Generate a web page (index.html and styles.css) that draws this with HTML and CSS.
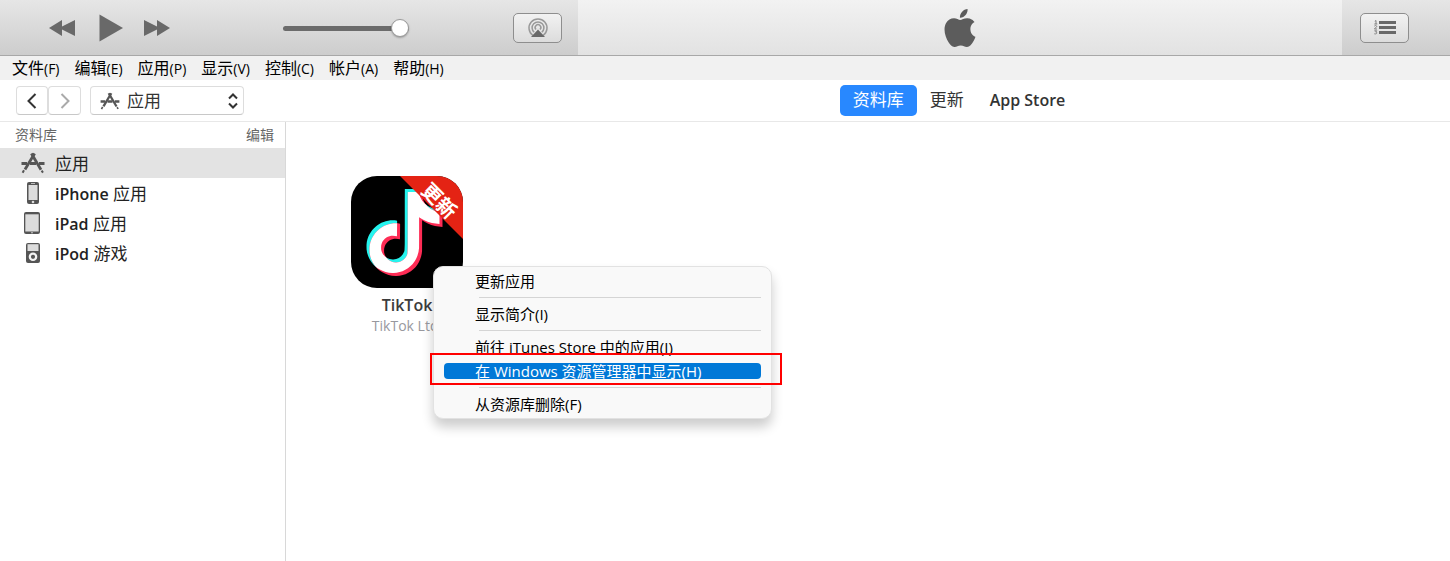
FILE: index.html
```html
<!DOCTYPE html>
<html lang="zh-CN">
<head>
<meta charset="utf-8">
<title>iTunes</title>
<link rel="stylesheet" href="styles.css">
</head>
<body>
<svg class="defs" aria-hidden="true">
  <symbol id="apps" viewBox="0 0 24 22">
    <g fill="none" stroke="currentColor">
      <path d="M13.600 1.500 4 17.500" stroke-width="2.800"/>
      <path d="m10.400 1.500 9.600 16.200" stroke-width="2.800"/>
      <path d="m3 18.200-1.400 2.600M20.600 18.600l1.400 2" stroke-width="2"/>
      <path d="M.500 11.500h5.500M9 11.500h6M18 11.500h5.500" stroke-width="3"/>
    </g>
  </symbol>
</svg>
<header class="player">
  <div class="transport">
    <button class="bare" aria-label="上一首"><svg width="27" height="18" viewBox="0 0 27 18"><path d="M0 9 13 1v6.500L26 1v16L13 10.500V17z"/></svg></button>
    <button class="bare" aria-label="播放"><svg width="25" height="28" viewBox="0 0 25 28"><path d="M.500.500 24 14 .500 27.500z"/></svg></button>
    <button class="bare" aria-label="下一首"><svg width="27" height="18" viewBox="0 0 27 18"><path d="M26 9 13 1v6.500L0 1v16l13-6.500V17z"/></svg></button>
    <input class="volume" type="range" min="0" max="100" value="100" aria-label="音量">
    <button class="bezel" aria-label="AirPlay">
      <svg width="22" height="22" viewBox="0 0 22 22"><g fill="none" stroke="#999" stroke-width="1.500"><path d="M6 18.500a9 9 0 1 1 10 0"/><path d="M7.200 15.300a5.900 5.900 0 1 1 7.600 0"/><path d="M9 12.500a2.800 2.800 0 1 1 4 0"/></g><path d="m11 12.500 7 7.500H4z"/></svg>
    </button>
  </div>
  <div class="display">
    <svg width="38" height="38" viewBox="0 0 24 24"><path d="M12.152 6.896c-.948 0-2.415-1.078-3.960-1.040-2.040.027-3.910 1.183-4.961 3.014-2.117 3.675-.546 9.103 1.519 12.090 1.013 1.454 2.208 3.090 3.792 3.039 1.520-.065 2.090-.987 3.935-.987 1.831 0 2.350.987 3.960.948 1.637-.026 2.676-1.480 3.676-2.948 1.156-1.688 1.636-3.325 1.662-3.415-.039-.013-3.182-1.221-3.220-4.857-.026-3.040 2.480-4.494 2.597-4.559-1.429-2.090-3.623-2.324-4.390-2.376-2-.156-3.675 1.090-4.610 1.090zM15.530 3.830c.843-1.012 1.400-2.427 1.245-3.830-1.207.052-2.662.805-3.532 1.818-.780.896-1.454 2.338-1.273 3.714 1.338.104 2.715-.688 3.559-1.701"/></svg>
  </div>
  <div class="queue">
    <button class="bezel" aria-label="待播清单">
      <svg width="22" height="15" viewBox="0 0 22 15"><path d="M5 1h17v3H5zM5 6h17v3H5zM5 11h17v3H5z"/><g fill="none" stroke="#777" stroke-width=".9"><path d="m.800 1.300 1.200-.800V4M.300 4h3M.400 6.200C.600 5.200 3 5.300 2.700 6.600L.400 9H3M.400 10.800h2.400l-1.200 1.200c2.200.2 1.300 2.500-1.300 1.800"/></g></svg>
    </button>
  </div>
</header>

<nav class="menubar" aria-label="菜单">
  <button>文件<span>(F)</span></button><button>编辑<span>(E)</span></button><button>应用<span>(P)</span></button><button>显示<span>(V)</span></button><button>控制<span>(C)</span></button><button>帐户<span>(A)</span></button><button>帮助<span>(H)</span></button>
</nav>

<div class="toolbar">
  <div class="browse">
    <div class="history">
      <button aria-label="后退"><svg width="10" height="16" viewBox="0 0 10 16"><path d="M8.500 1 1.500 8l7 7"/></svg></button>
      <button class="off" aria-label="前进"><svg width="10" height="16" viewBox="0 0 10 16"><path d="m1.500 1 7 7-7 7"/></svg></button>
    </div>
    <div class="picker">
      <svg class="kind" width="20" height="18"><use href="#apps"/></svg>
      <select aria-label="媒体类型"><option>应用</option></select>
      <svg class="arrows" width="10" height="16" viewBox="0 0 10 16"><path d="m1 5.500 4-4 4 4M1 10.500l4 4 4-4"/></svg>
    </div>
  </div>
  <nav class="tabs">
    <a class="current" href="#library">资料库</a>
    <a href="#updates">更新</a>
    <a class="latin" href="#store">App Store</a>
  </nav>
</div>

<div class="body">
  <aside class="sidebar">
    <div class="heading"><span>资料库</span><button>编辑</button></div>
    <a class="selected" href="#apps-all"><svg width="24" height="22"><use href="#apps"/></svg><span>应用</span></a>
    <a href="#iphone"><svg width="24" height="22" viewBox="0 0 24 22"><rect x="6" width="12" height="22" rx="2"/><path class="glass" d="M7.500 3h9v15h-9zM10 1h4v.8h-4z"/><circle class="glass" cx="12" cy="20" r="1.300"/></svg><span><b>iPhone</b> 应用</span></a>
    <a href="#ipad"><svg width="24" height="22" viewBox="0 0 24 22"><rect x="3" width="16" height="22" rx="2"/><path class="glass" d="M4.300 2.300h13.400v17.200H4.300z"/><circle class="glass" cx="11" cy="20.700" r=".8"/></svg><span><b>iPad</b> 应用</span></a>
    <a href="#ipod"><svg width="24" height="22" viewBox="0 0 24 22"><rect x="5" y="1" width="14" height="20" rx="2"/><path class="glass" d="M6.500 2.200h11v6.800h-11z"/><circle cx="12" cy="14.800" r="3.200" fill="none" stroke="#f4f4f4" stroke-width="2.200"/></svg><span><b>iPod</b> 游戏</span></a>
  </aside>
  <main class="library">
    <article class="app">
      <svg class="art" width="112" height="112" viewBox="0 0 112 112" role="img" aria-label="TikTok">
        <defs>
          <path id="note" d="M12.525.02c1.310-.02 2.610-.01 3.910-.02.080 1.530.630 3.090 1.750 4.170 1.120 1.110 2.700 1.620 4.240 1.790v4.030c-1.440-.05-2.890-.35-4.200-.97-.570-.26-1.100-.59-1.620-.93-.010 2.920.010 5.840-.020 8.750-.080 1.400-.540 2.790-1.350 3.940-1.310 1.920-3.580 3.170-5.910 3.210-1.430.080-2.860-.31-4.080-1.030-2.020-1.190-3.440-3.370-3.650-5.710-.020-.5-.030-1-.010-1.490.180-1.900 1.120-3.720 2.580-4.960 1.660-1.440 3.980-2.130 6.150-1.720.020 1.480-.040 2.960-.040 4.440-.990-.32-2.150-.23-3.020.370-.630.410-1.110 1.040-1.360 1.750-.210.510-.150 1.070-.140 1.610.240 1.640 1.820 3.020 3.500 2.870 1.120-.010 2.190-.66 2.770-1.610.190-.33.400-.67.410-1.060.100-1.790.060-3.570.070-5.360.010-4.030-.010-8.050.020-12.070z"/>
          <clipPath id="overlap"><use href="#note" transform="translate(10 13) scale(3.500)"/></clipPath>
          <clipPath id="tile"><rect width="112" height="112" rx="26"/></clipPath>
        </defs>
        <g clip-path="url(#tile)">
          <rect width="112" height="112"/>
          <use href="#note" transform="translate(10 13) scale(3.500)" fill="#25f4ee"/>
          <use href="#note" transform="translate(13 16) scale(3.500)" fill="#fe2c55"/>
          <g clip-path="url(#overlap)"><use href="#note" transform="translate(13 16) scale(3.500)" fill="#fff"/></g>
          <path d="M49 0h63v63z" fill="#e42314"/>
          <text class="ribbon" transform="translate(88 25) rotate(45)" y="7" text-anchor="middle">更新</text>
        </g>
      </svg>
      <h2>TikTok</h2>
      <p>TikTok Ltd.</p>
      <div class="context" role="menu">
        <button role="menuitem">更新应用</button>
        <hr>
        <button role="menuitem">显示简介(I)</button>
        <hr>
        <button role="menuitem">前往 iTunes Store 中的应用(I)</button>
        <button class="active" role="menuitem">在 Windows 资源管理器中显示(H)</button>
        <hr>
        <button role="menuitem">从资源库删除(F)</button>
        <div class="marker"></div>
      </div>
    </article>
  </main>
</div>
</body>
</html>
```
FILE: styles.css
```css
* { box-sizing: border-box; }

body {
  margin: 0;
  min-height: 100vh;
  display: flex;
  flex-direction: column;
  background: #fff;
  color: #222;
  font: 17px "Open Sans", "Noto Sans CJK SC", sans-serif;
}

button {
  margin: 0;
  padding: 0;
  border: 0;
  background: none;
  color: inherit;
  font: inherit;
}

a { color: inherit; text-decoration: none; }
svg { display: block; flex: none; }
.defs { position: absolute; width: 0; height: 0; }

/* Player bar */
.player {
  display: grid;
  grid-template-columns: 578px 1fr 108px;
  height: 56px;
  border-bottom: 1px solid #a8a8a8;
  background: linear-gradient(#e6e6e6, #cdcdcd);
  fill: #696969;
}

.transport {
  display: flex;
  align-items: center;
  padding: 0 16px 0 49px;
  gap: 20px;
}
.transport .bare:nth-child(1) { margin-right: 3px; }

.volume {
  appearance: none;
  width: 126px;
  height: 20px;
  margin: 1px auto 0 92px;
  background: none;
}
.volume::-webkit-slider-runnable-track {
  height: 5px;
  border-radius: 3px;
  background: #6b6b6b;
}
.volume::-webkit-slider-thumb {
  appearance: none;
  width: 18px;
  height: 18px;
  margin-top: -7px;
  border: 1px solid #999;
  border-radius: 50%;
  background: #fff;
  box-shadow: 0 1px 2px #0004;
}

.bezel {
  display: grid;
  place-items: center;
  width: 49px;
  height: 30px;
  border: 1px solid #8e8e8e;
  border-radius: 5px;
  background: linear-gradient(#f2f2f2, #dcdcdc);
}

.display {
  display: grid;
  place-items: center;
  background: linear-gradient(#f2f2f2, #e2e2e2);
  fill: #5c5c5c;
}

.queue {
  display: flex;
  align-items: center;
  padding-left: 18px;
}

/* Menu bar */
.menubar {
  display: flex;
  gap: 15px;
  height: 24px;
  padding-left: 12px;
  background: #f1f1f1;
  color: #000;
  font-size: 16px;
  line-height: 22px;
}
.menubar span { font-size: 14px; }

/* Toolbar */
.toolbar {
  display: grid;
  grid-template-columns: 576px 1fr 108px;
  align-items: center;
  height: 42px;
  border-bottom: 1px solid #e8e8e8;
}

.browse { display: flex; gap: 9px; padding-left: 16px; }
.history { display: flex; }
.history button {
  display: grid;
  place-items: center;
  width: 33px;
  height: 29px;
  border: 1px solid #ddd;
  border-bottom-color: #c8c8c8;
  border-radius: 4px;
}
.history button:first-child { width: 32px; }
.history svg, .arrows { fill: none; stroke: #333; stroke-width: 2; }
.history .off svg { stroke: #aaa; }

.picker {
  display: grid;
  grid-template-columns: 10px 20px 1fr 10px 6px;
  align-items: center;
  width: 154px;
  height: 29px;
  color: #555;
}
.picker > * { grid-row: 1; }
.kind { grid-column: 2; }
.arrows { grid-column: 4; }
.picker select {
  grid-column: 1 / -1;
  appearance: none;
  height: 29px;
  padding: 0 0 0 36px;
  border: 1px solid #ddd;
  border-bottom-color: #c8c8c8;
  border-radius: 4px;
  background: none;
  color: #333;
  font: inherit;
}

.tabs { display: flex; justify-content: center; color: #333; }
.tabs a {
  height: 31px;
  padding: 0 13px;
  border-radius: 5px;
  line-height: 30px;
}
.tabs .current { background: #2888ff; color: #fff; }
.tabs .latin { font-size: 16px; font-weight: 600; }

/* Sidebar */
.body { display: flex; flex: 1; }
.sidebar {
  width: 286px;
  border-right: 1px solid #d8d8d8;
}
.heading {
  display: flex;
  justify-content: space-between;
  height: 26px;
  padding: 0 11px 0 15px;
  color: #666;
  font-size: 14px;
  line-height: 26px;
}
.sidebar a {
  display: flex;
  align-items: center;
  gap: 10px;
  height: 30px;
  padding-left: 21px;
  line-height: 30px;
}
.sidebar a span { padding-top: 2px; }
.sidebar a svg { color: #555; fill: #555; }
.sidebar .glass { fill: #dcdcdc; }
.sidebar b { font-size: 16px; font-weight: 600; }
.sidebar .selected { background: #e3e3e3; }

/* Library */
.library { flex: 1; padding: 54px 65px; }
.app { position: relative; width: 112px; text-align: center; }
.app h2 {
  margin: 6px 0 0;
  color: #3c3c3c;
  font-size: 16px;
  font-weight: 600;
  line-height: 22px;
}
.app p {
  margin: 0;
  color: #98989e;
  font-size: 14px;
  line-height: 20px;
}
.ribbon { fill: #fff; font-size: 20px; font-weight: 700; }

/* Context menu */
.context {
  position: absolute;
  top: 90px;
  left: 82px;
  display: flex;
  flex-direction: column;
  gap: 8px;
  width: 339px;
  padding: 6px 10px;
  border: 1px solid #e2e2e2;
  border-radius: 10px;
  background: #f9f9f9;
  box-shadow: 0 8px 12px #0003;
  color: #000;
  font-size: 15px;
}
.context button {
  height: 16px;
  padding-left: 31px;
  border-radius: 4px;
  line-height: 16px;
  text-align: left;
  white-space: nowrap;
}
.context .active { background: #0078d7; color: #fff; }
.context hr {
  width: 282px;
  height: 1px;
  margin: 0 0 0 auto;
  border: 0;
  background: #d5d5d5;
}
.marker {
  position: absolute;
  top: 86px;
  left: -4px;
  width: 352px;
  height: 32px;
  border: 2px solid #f00;
  pointer-events: none;
}
```
